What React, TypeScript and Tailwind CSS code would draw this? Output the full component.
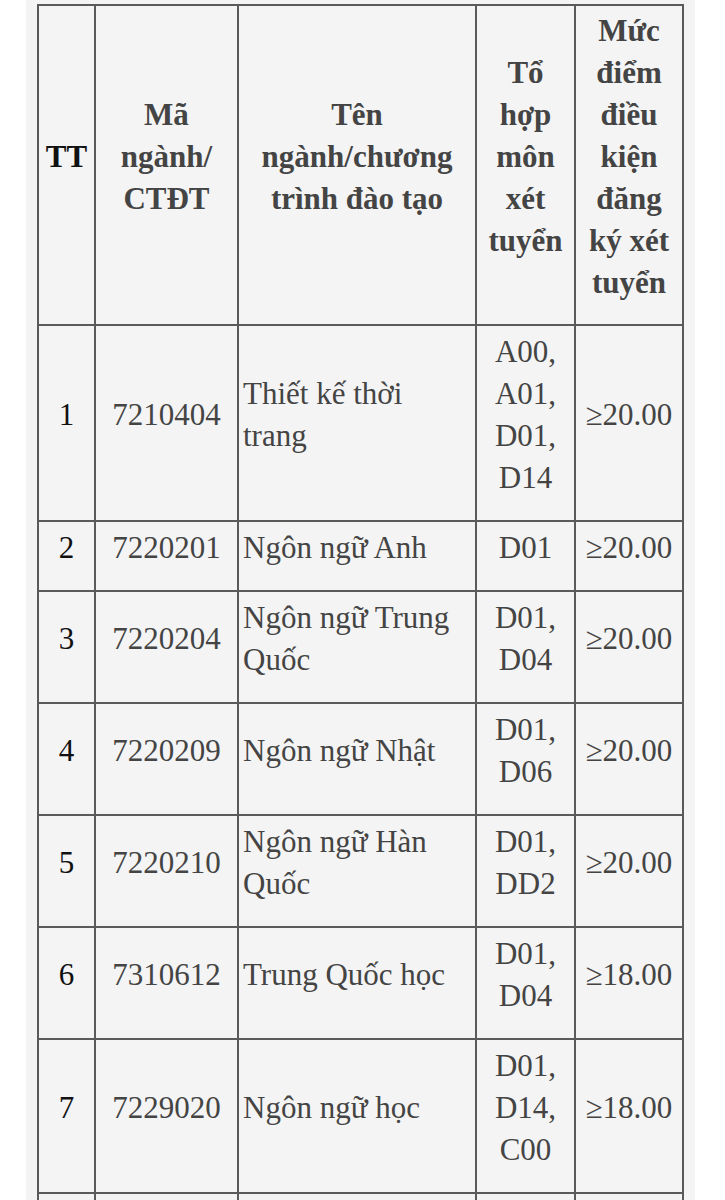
import React from 'react';

type Row = {
  tt: string;
  code: string;
  name: string[];
  combo: string[];
  score: string;
};

const rows: Row[] = [
  { tt: '1', code: '7210404', name: ['Thiết kế thời', 'trang'], combo: ['A00,', 'A01,', 'D01,', 'D14'], score: '≥20.00' },
  { tt: '2', code: '7220201', name: ['Ngôn ngữ Anh'], combo: ['D01'], score: '≥20.00' },
  { tt: '3', code: '7220204', name: ['Ngôn ngữ Trung', 'Quốc'], combo: ['D01,', 'D04'], score: '≥20.00' },
  { tt: '4', code: '7220209', name: ['Ngôn ngữ Nhật'], combo: ['D01,', 'D06'], score: '≥20.00' },
  { tt: '5', code: '7220210', name: ['Ngôn ngữ Hàn', 'Quốc'], combo: ['D01,', 'DD2'], score: '≥20.00' },
  { tt: '6', code: '7310612', name: ['Trung Quốc học'], combo: ['D01,', 'D04'], score: '≥18.00' },
  { tt: '7', code: '7229020', name: ['Ngôn ngữ học'], combo: ['D01,', 'D14,', 'C00'], score: '≥18.00' },
];

const lines = (parts: string[]) =>
  parts.map((p, i) => (
    <React.Fragment key={i}>
      {p}
      {i < parts.length - 1 && <br />}
    </React.Fragment>
  ));

// text in the shot sits a little above the cell middle, so padding is uneven
const cell = 'border-2 border-[#5a5a5a] px-1 pt-[5px] pb-[21px] align-middle';
const head = 'border-2 border-[#5a5a5a] px-1 pt-[4px] pb-[20px] align-middle text-center';

const App: React.FC = () => {
  return (
    <div className="min-h-[1200px] bg-white">
      <div
        className="ml-[26px] w-[669px] min-h-[1200px] bg-[#f4f4f4] pl-[11px] pt-1 text-[31px] leading-[42px] text-[#444]"
        style={{ fontFamily: '"Liberation Serif", "Times New Roman", serif' }}
      >
        <table className="table-fixed border-collapse w-[645px]">
          <colgroup>
            <col className="w-[57px]" />
            <col className="w-[143px]" />
            <col className="w-[238px]" />
            <col className="w-[99px]" />
            <col className="w-[108px]" />
          </colgroup>
          <thead>
            <tr className="font-bold">
              <th className={`${head} text-[#111]`}>TT</th>
              <th className={head}>{lines(['Mã', 'ngành/', 'CTĐT'])}</th>
              <th className={head}>{lines(['Tên', 'ngành/chương', 'trình đào tạo'])}</th>
              <th className={head}>{lines(['Tổ', 'hợp', 'môn', 'xét', 'tuyển'])}</th>
              <th className={head}>{lines(['Mức', 'điểm', 'điều', 'kiện', 'đăng', 'ký xét', 'tuyển'])}</th>
            </tr>
          </thead>
          <tbody>
            {rows.map(r => (
              <tr key={r.tt}>
                <td className={`${cell} text-center text-[#111]`}>{r.tt}</td>
                <td className={`${cell} text-center`}>{r.code}</td>
                <td className={`${cell} text-left`}>{lines(r.name)}</td>
                <td className={`${cell} text-center`}>{lines(r.combo)}</td>
                <td className={`${cell} text-center`}>{r.score}</td>
              </tr>
            ))}
            <tr>
              <td className={cell}>&nbsp;</td>
              <td className={cell}>&nbsp;</td>
              <td className={cell}>&nbsp;</td>
              <td className={cell}>&nbsp;</td>
              <td className={cell}>&nbsp;</td>
            </tr>
          </tbody>
        </table>
      </div>
    </div>
  );
};

export default App;
